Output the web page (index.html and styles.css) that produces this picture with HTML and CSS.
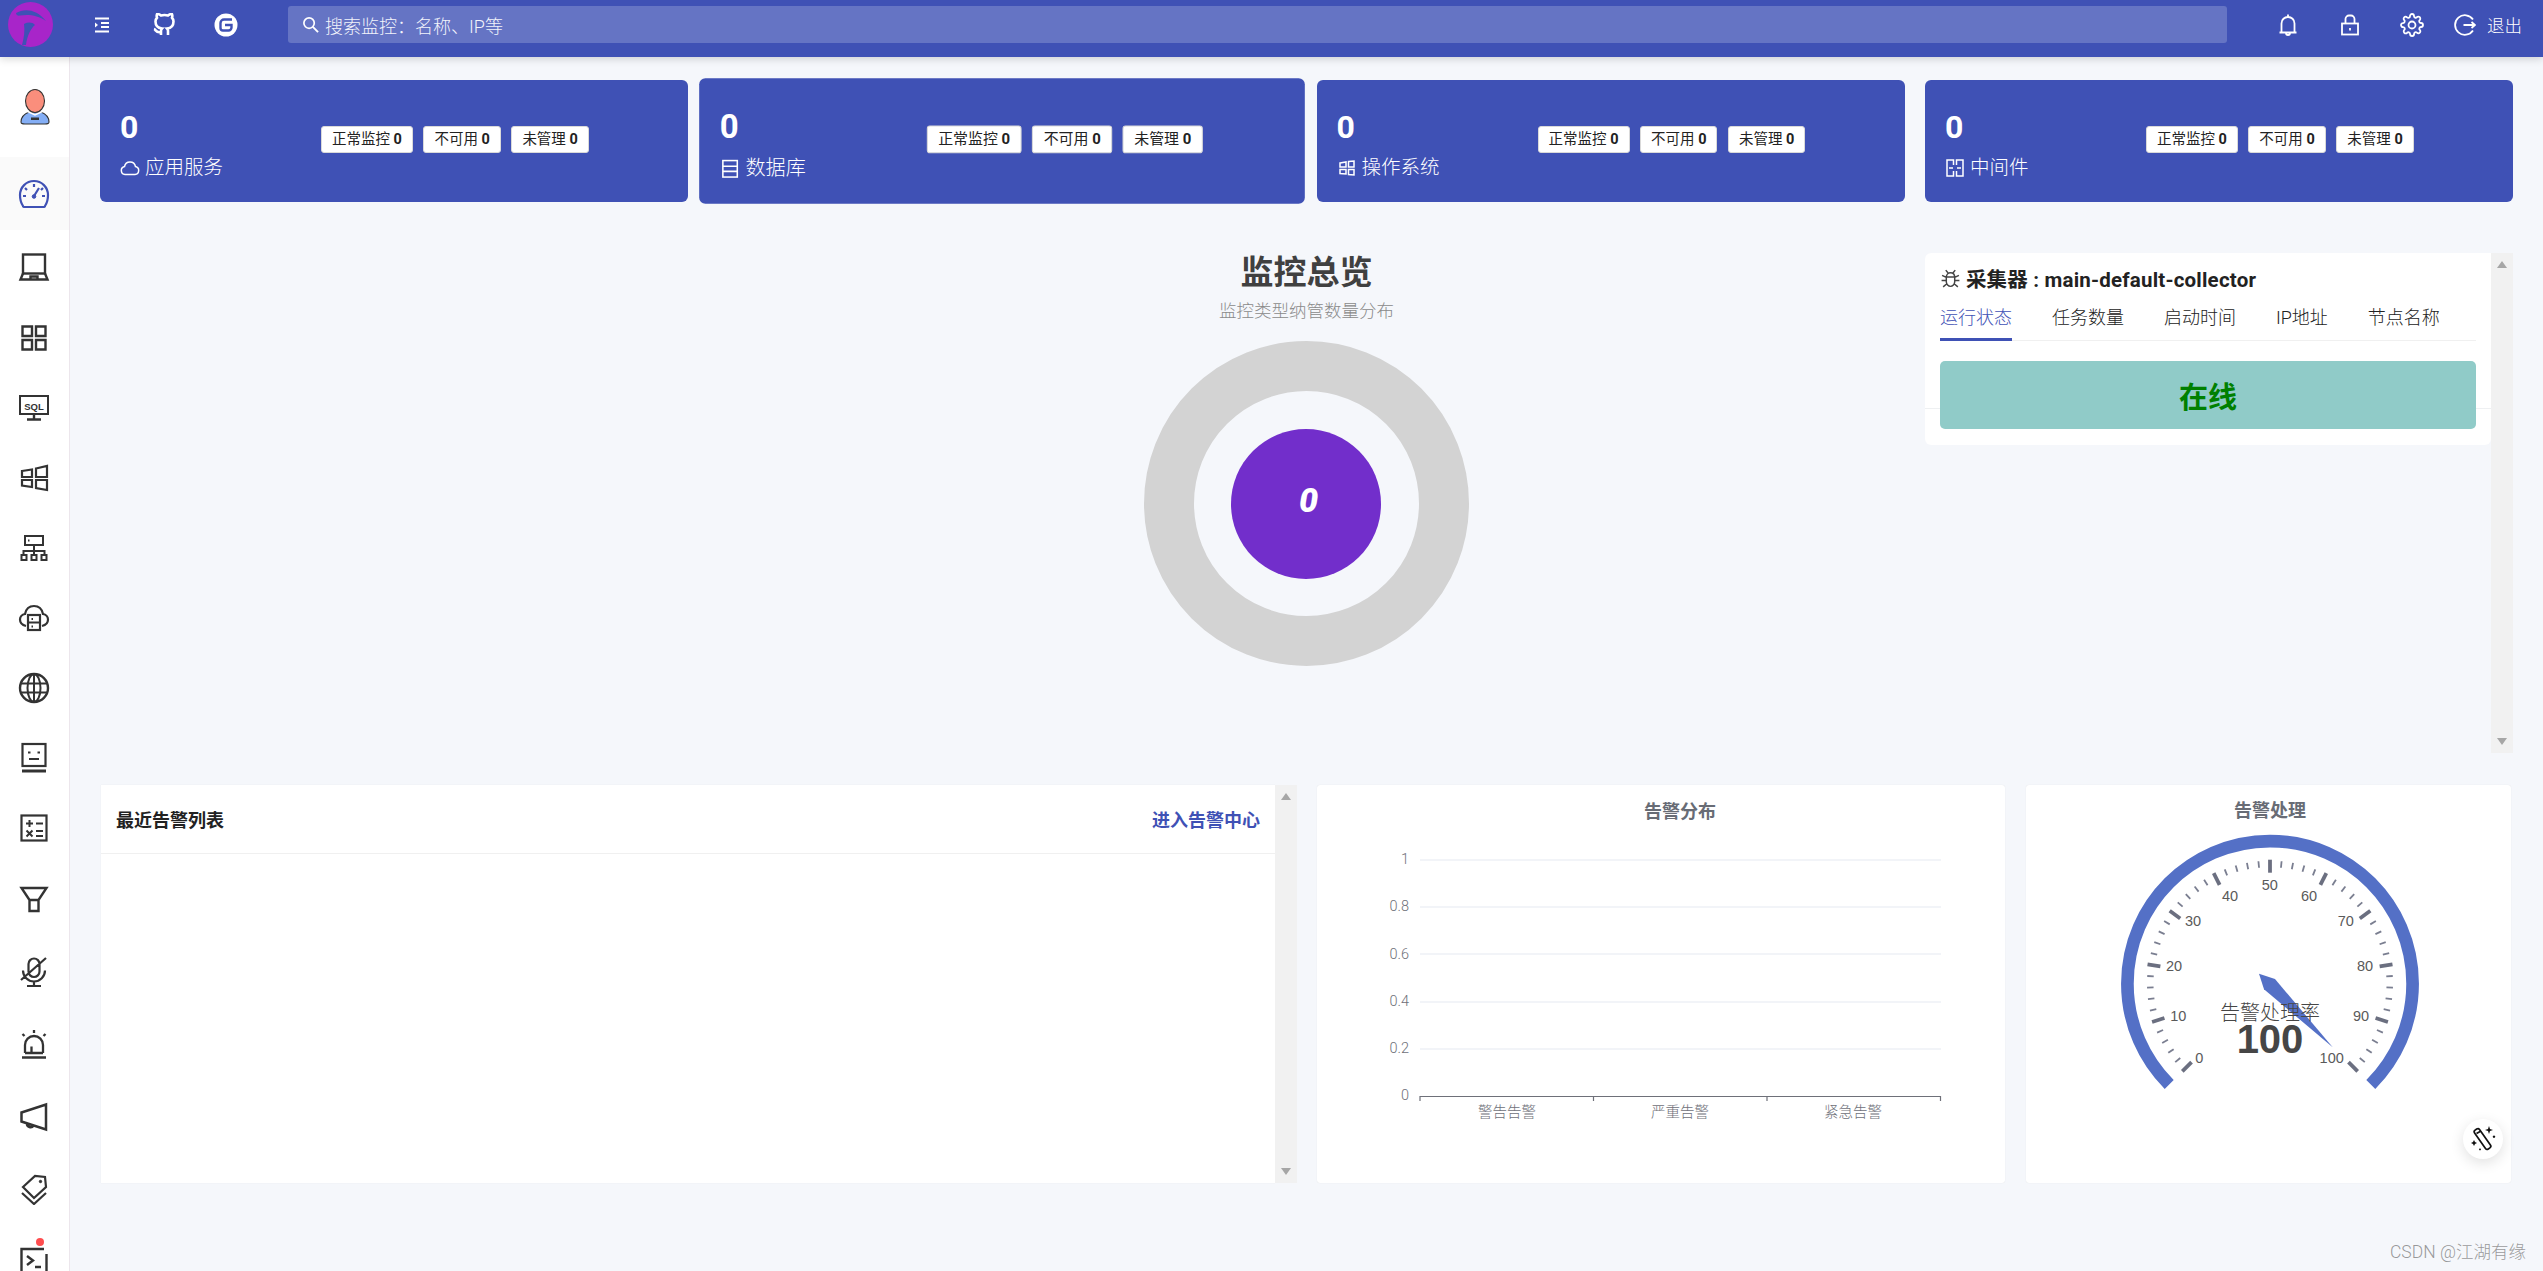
FILE: index.html
```html
<!DOCTYPE html>
<html lang="zh-CN">
<head>
<meta charset="utf-8">
<title>监控总览</title>
<link rel="stylesheet" href="styles.css">
</head>
<body>
<header class="topbar">
  <svg class="logo" viewBox="8 2 45 45" width="45" height="45"><ellipse cx="30.5" cy="24.5" rx="22.5" ry="22.5" fill="#a825c9"/><path d="M16 13C24 8 37 9 46 21C38 15 28 14 20 15.500C18 16 16 15 16 13Z" fill="#3f51b5"/><path d="M24 24C28 22 32 22 35 25C31 28 27 36 26 45L22 45C24 38 25 30 24 24Z" fill="#3f51b5"/></svg>
  <button class="tb-btn first"><svg viewBox="0 0 16 16" width="16" height="16" class="w"><path d="M1 1.500H15M7 6H15M7 10H15M1 14.500H15" stroke-width="1.800"/><path d="M1 5.500L4 8L1 10.500Z" fill="#fff" stroke="none"/></svg></button>
  <button class="tb-btn"><svg viewBox="0 0 24 24" width="24" height="24" class="w"><path stroke-width="2.600" d="M9 19c-5 1.500-5-2.500-7-3m14 6v-3.870a3.370 3.370 0 0 0-.94-2.610c3.140-.35 6.440-1.540 6.440-7A5.440 5.440 0 0 0 20 4.770 5.070 5.070 0 0 0 19.910 1S18.730.65 16 2.480a13.380 13.380 0 0 0-7 0C6.270.65 5.090 1 5.090 1A5.070 5.070 0 0 0 5 4.770a5.440 5.440 0 0 0-1.500 3.780c0 5.420 3.300 6.610 6.440 7A3.370 3.370 0 0 0 9 18.130V22"/></svg></button>
  <button class="tb-btn"><svg viewBox="0 0 24 24" width="24" height="24"><circle cx="12" cy="12" r="11.500" fill="#fff"/><path d="M18 6.500H10A3.500 3.500 0 0 0 6.500 10V15A2.500 2.500 0 0 0 9 17.500H14.500A3 3 0 0 0 17.500 14.500V12H11" fill="none" stroke="#3f51b5" stroke-width="2.400"/></svg></button>
  <div class="search"><svg viewBox="0 0 18 18" width="17" height="17" class="w"><circle cx="7.500" cy="7.500" r="5.500" stroke-width="1.800"/><path d="M11.500 11.500L17 17" stroke-width="2"/></svg><span>搜索监控：名称、IP等</span></div>
  <button class="tb-btn gap-left"><svg viewBox="0 0 24 24" width="24" height="24" class="w"><path stroke-width="1.800" d="M3.500 19.500H20.500M5.500 19.500V10.500C5.500 6.500 8.500 4 12 4S18.500 6.500 18.500 10.500V19.500M12 1.500V4M10 20A2 2 0 0 0 14 20"/></svg></button>
  <button class="tb-btn"><svg viewBox="0 0 24 24" width="24" height="24" class="w"><rect x="4" y="10.500" width="16" height="11" stroke-width="1.800"/><path d="M7.500 10.500V6A3.500 3.500 0 0 1 11 2.500H13A3.500 3.500 0 0 1 16.500 6V10.500M12 15V17.500" stroke-width="1.800"/></svg></button>
  <button class="tb-btn"><svg viewBox="0 0 24 24" width="24" height="24" class="w"><circle cx="12" cy="12" r="3.500" stroke-width="1.800"/><path stroke-width="1.800" d="M19.400 15a1.650 1.650 0 0 0 .33 1.820l.06.06a2 2 0 0 1 0 2.830 2 2 0 0 1-2.830 0l-.06-.06a1.650 1.650 0 0 0-1.820-.33 1.650 1.650 0 0 0-1 1.510V21a2 2 0 0 1-2 2 2 2 0 0 1-2-2v-.09A1.650 1.650 0 0 0 9 19.400a1.650 1.650 0 0 0-1.820.33l-.06.06a2 2 0 0 1-2.830 0 2 2 0 0 1 0-2.830l.06-.06a1.650 1.650 0 0 0 .33-1.820 1.650 1.650 0 0 0-1.510-1H3a2 2 0 0 1-2-2 2 2 0 0 1 2-2h.09A1.650 1.650 0 0 0 4.600 9a1.650 1.650 0 0 0-.33-1.820l-.06-.06a2 2 0 0 1 0-2.830 2 2 0 0 1 2.830 0l.06.06a1.650 1.650 0 0 0 1.820.33H9a1.650 1.650 0 0 0 1-1.510V3a2 2 0 0 1 2-2 2 2 0 0 1 2 2v.09a1.650 1.650 0 0 0 1 1.510 1.650 1.650 0 0 0 1.820-.33l.06-.06a2 2 0 0 1 2.830 0 2 2 0 0 1 0 2.830l-.06.06a1.650 1.650 0 0 0-.33 1.820V9a1.650 1.650 0 0 0 1.510 1H21a2 2 0 0 1 2 2 2 2 0 0 1-2 2h-.09a1.650 1.650 0 0 0-1.510 1z"/></svg></button>
  <div class="logout"><svg viewBox="0 0 22 22" width="22" height="22" class="w"><path stroke-width="1.800" d="M19 5.500A9.800 9.800 0 1 0 19 16.500M9.500 11H21M17.500 8L21 11L17.500 14"/></svg><span>退出</span></div>
</header>

<div class="layout">
  <nav class="sidebar">
    <div class="nav-avatar"><svg viewBox="0 0 32 38" width="32" height="38"><path d="M2 34C2 29 5 26 10 24L22 24C27 26 30 29 30 34C30 36 28 36 26 36H6C4 36 2 36 2 34Z" fill="#84aef5" stroke="#333" stroke-width="1.100"/><ellipse cx="16" cy="13" rx="9.500" ry="11.500" fill="#fa8e7c" stroke="#333" stroke-width="1.100"/><path d="M6.500 22.500L16 27L25.500 22.500" fill="none" stroke="#fff" stroke-width="1.500"/><rect x="12" y="29.500" width="8" height="2.500" fill="#333"/></svg></div>
    <div class="nav-item active"><svg viewBox="0 0 32 32" width="32" height="32" class="b"><path d="M5 28C3 25 2 21 2 17A14 14 0 0 1 30 17C30 21 29 25 27 28C27 29 26 29 25 29H7C6 29 5 29 5 28Z" stroke-width="2.200"/><path d="M16 18L21 10M16 6V9M7 10L9 12M25 10L23 12M5 18H8M27 18H24" stroke-width="2.200"/><circle cx="16" cy="18.500" r="1.800" fill="#3f51b5"/></svg></div>
    <div class="nav-item lead"><svg viewBox="0 0 32 32" width="32" height="32" class="k"><rect x="5" y="3.500" width="22" height="19" stroke-width="2.400"/><path d="M5 22.500L2.500 28.500H29.500L27 22.500M12.500 28.500V25.500H19.500V28.500" stroke-width="2.400"/></svg></div>
    <div class="nav-item"><svg viewBox="0 0 32 32" width="32" height="32" class="k"><path stroke-width="2.400" d="M4.500 4.500H14V14H4.500ZM18 4.500H27.500V14H18ZM4.500 18H14V27.500H4.500ZM18 18H27.500V27.500H18Z"/></svg></div>
    <div class="nav-item"><svg viewBox="0 0 32 32" width="32" height="32" class="k"><rect x="2" y="4" width="28" height="18" stroke-width="2"/><path d="M16 22V27M9 27.500H23" stroke-width="2.400"/><text class="sql" x="16" y="17.500" text-anchor="middle">SQL</text></svg></div>
    <div class="nav-item"><svg viewBox="0 0 32 32" width="32" height="32" class="k"><path stroke-width="2.200" d="M4 9L14 7.500V15H4ZM18 6.500L29 4V15H18ZM4 18H14V25L4 23.500ZM18 18H29V28L18 26Z"/></svg></div>
    <div class="nav-item"><svg viewBox="0 0 32 32" width="32" height="32" class="k"><rect x="7" y="4" width="18" height="9" stroke-width="2"/><path d="M10 8.500H11.500M16 13V19M5.500 23V19H26.500V23M16 19V23" stroke-width="2"/><path d="M3.500 23H8.500V28H3.500ZM13.500 23H18.500V28H13.500ZM23.500 23H28.500V28H23.500Z" stroke-width="2"/></svg></div>
    <div class="nav-item"><svg viewBox="0 0 32 32" width="32" height="32" class="k"><path stroke-width="2.200" d="M8 24C4 23 2 20 2 17.500C2 15 4 12.500 7 12C8 7 11.500 4 16 4C20.500 4 24 7 25 12C28 12.500 30 15 30 17.500C30 20 28 23 24 24"/><rect x="10" y="13" width="12" height="15" stroke-width="2.200"/><path d="M10 20.500H22M13.500 17H15M13.500 24.500H15" stroke-width="2"/></svg></div>
    <div class="nav-item"><svg viewBox="0 0 32 32" width="32" height="32" class="k"><circle cx="16" cy="16" r="14" stroke-width="2.400"/><ellipse cx="16" cy="16" rx="6.500" ry="14" stroke-width="2"/><path d="M3 11.500H29M3 20.500H29M16 2V30" stroke-width="2"/></svg></div>
    <div class="nav-item"><svg viewBox="0 0 32 32" width="32" height="32" class="k"><rect x="4.500" y="2" width="23" height="22" stroke-width="2.200"/><path d="M10 10.500H12.500M19.500 10.500H22M11 17H21" stroke-width="2.200"/><path d="M4 29H28" stroke-width="3"/></svg></div>
    <div class="nav-item"><svg viewBox="0 0 32 32" width="32" height="32" class="k"><rect x="3.500" y="3.500" width="25" height="25" stroke-width="2.200"/><path d="M8 11.500H15M11.500 8V15M18 11.500H25M8.500 18.500L14.500 24.500M14.500 18.500L8.500 24.500M18 19H25M18 24H25" stroke-width="2"/></svg></div>
    <div class="nav-item tall"><svg viewBox="0 0 32 32" width="32" height="32" class="k"><path stroke-width="2.400" d="M3.500 5H28.500L20.500 17H11.500ZM11.500 17V28H20.500V17"/></svg></div>
    <div class="nav-item tall"><svg viewBox="0 0 32 32" width="32" height="32" class="k"><path stroke-width="2.200" d="M16 21A5.500 5.500 0 0 1 10.500 15.500V8A5.500 5.500 0 0 1 21.500 8V15.500A5.500 5.500 0 0 1 16 21ZM5 14.500A11 11 0 0 0 27 14.500M16 25V30M9 30H23M3 24L28 2"/></svg></div>
    <div class="nav-item tall"><svg viewBox="0 0 32 32" width="32" height="32" class="k"><path stroke-width="2.300" d="M7 25V17A9 9 0 0 1 25 17V25M13.500 25V18.500M4 29.500H28M16 2V5M4.500 6L6.500 8M27.500 6L25.500 8M7 25H25"/></svg></div>
    <div class="nav-item tall"><svg viewBox="0 0 32 32" width="32" height="32" class="k"><path stroke-width="2.500" d="M3.500 11.500L28 3.500V28.500L3.500 20.500ZM9 22.500A3.500 3.500 0 0 0 15.500 24.500"/></svg></div>
    <div class="nav-item tall"><svg viewBox="0 0 32 32" width="32" height="32" class="k"><path stroke-width="2.200" d="M5 14L17 3L27 4L28 14L16 25ZM4 20L16 31L28 20"/><circle cx="22.500" cy="8.500" r="1.200" fill="#333"/></svg></div>
    <div class="nav-item tall nav-term"><svg viewBox="0 0 32 32" width="32" height="32" class="k"><path stroke-width="2.400" d="M26 3H3.500V29H28.500V8M9 10L15 14.500L9 19M17 21H23"/></svg><i class="dot"></i></div>
  </nav>

  <main class="main">
    <section class="stat-row">
      <article class="stat">
        <div class="stat-left"><div class="stat-num">0</div><div class="stat-label"><svg viewBox="0 0 20 20" width="20" height="20" class="w"><path stroke-width="1.500" d="M5 16.500A4 4 0 0 1 4.500 8.600A5.600 5.600 0 0 1 15.500 8.600A4 4 0 0 1 15 16.500Z"/></svg><span>应用服务</span></div></div>
        <div class="badges"><span class="badge">正常监控 <b>0</b></span><span class="badge">不可用 <b>0</b></span><span class="badge">未管理 <b>0</b></span></div>
      </article>
      <article class="stat lifted">
        <div class="stat-left"><div class="stat-num">0</div><div class="stat-label"><svg viewBox="0 0 20 20" width="20" height="20" class="w"><rect x="3" y="2" width="14" height="16" stroke-width="1.500"/><path d="M3 7.500H17M3 12.500H17" stroke-width="1.500"/></svg><span>数据库</span></div></div>
        <div class="badges"><span class="badge">正常监控 <b>0</b></span><span class="badge">不可用 <b>0</b></span><span class="badge">未管理 <b>0</b></span></div>
      </article>
      <article class="stat">
        <div class="stat-left"><div class="stat-num">0</div><div class="stat-label"><svg viewBox="0 0 20 20" width="20" height="20" class="w"><path stroke-width="1.500" d="M3 5L9 4V9H3ZM11.500 3.500L17 3V9H11.500ZM3 11.500H9V16L3 15.500ZM11.500 11.500H17V17L11.500 16.500Z"/></svg><span>操作系统</span></div></div>
        <div class="badges"><span class="badge">正常监控 <b>0</b></span><span class="badge">不可用 <b>0</b></span><span class="badge">未管理 <b>0</b></span></div>
      </article>
      <article class="stat">
        <div class="stat-left"><div class="stat-num">0</div><div class="stat-label"><svg viewBox="0 0 20 20" width="20" height="20" class="w"><path stroke-width="1.500" d="M8.500 7V2H2V18H8.500V13M11.500 7V2H18V18H11.500V13M4 10H8M16 10H12"/></svg><span>中间件</span></div></div>
        <div class="badges"><span class="badge">正常监控 <b>0</b></span><span class="badge">不可用 <b>0</b></span><span class="badge">未管理 <b>0</b></span></div>
      </article>
    </section>

    <section class="mid-row">
      <div class="overview">
        <h1 class="ov-title">监控总览</h1>
        <p class="ov-sub">监控类型纳管数量分布</p>
        <div class="donut"><div class="donut-core"><em>0</em></div></div>
      </div>
      <div class="collector-wrap">
        <div class="collector">
          <div class="col-title"><svg viewBox="0 0 20 20" width="21" height="21"><g fill="none" stroke="#444" stroke-width="1.400"><path d="M6 9C6 6 8 4.500 10 4.500S14 6 14 9V13C14 15.500 12 17.500 10 17.500S6 15.500 6 13ZM6.500 8.500H13.500M7.500 4.500L5.500 2M12.500 4.500L14.500 2M6 9L2 7M14 9L18 7M6 12H1.500M14 12H18.500M6.500 15L3 18M13.500 15L17 18"/></g></svg><span>采集器 : main-default-collector</span></div>
          <div class="tabs"><span class="tab on">运行状态</span><span class="tab">任务数量</span><span class="tab">启动时间</span><span class="tab">IP地址</span><span class="tab">节点名称</span></div>
          <div class="status">在线</div>
        </div>
        <div class="scrollbar"></div>
      </div>
    </section>

    <section class="bottom-row">
      <div class="alerts-wrap">
        <div class="alerts">
          <div class="alerts-head"><span class="alerts-title">最近告警列表</span><a class="alerts-link">进入告警中心</a></div>
        </div>
        <div class="scrollbar"></div>
      </div>
      <div class="chart-card">
        <svg viewBox="1 0 688 398" width="688" height="398">
          <text class="ch-title" x="364" y="33" text-anchor="middle">告警分布</text>
          <g class="grid"><path d="M104 75H625M104 122H625M104 169H625M104 217H625M104 264H625"/></g>
          <path class="axis" d="M104 316V311.500H624.500V316M277.500 311.500V316M451 311.500V316"/>
          <g class="yl" text-anchor="end"><text x="93" y="79">1</text><text x="93" y="126">0.8</text><text x="93" y="174">0.6</text><text x="93" y="221">0.4</text><text x="93" y="268">0.2</text><text x="93" y="315">0</text></g>
          <g class="xl" text-anchor="middle"><text x="191" y="332">警告告警</text><text x="364" y="332">严重告警</text><text x="537" y="332">紧急告警</text></g>
        </svg>
      </div>
      <div class="chart-card">
        <svg viewBox="2 0 486 398" width="486" height="398">
          <defs>
            <path id="mj" d="M0 -124V-111"/>
            <path id="mn" d="M0 -123V-116.500"/>
          </defs>
          <text class="ch-title" x="246" y="32" text-anchor="middle">告警处理</text>
          <path class="g-arc" d="M145.200 299.500A142.600 142.600 0 1 1 346.800 299.500"/>
          <g class="majors" transform="translate(246 198.700)"><use href="#mj" transform="rotate(-135)"/><use href="#mj" transform="rotate(-108)"/><use href="#mj" transform="rotate(-81)"/><use href="#mj" transform="rotate(-54)"/><use href="#mj" transform="rotate(-27)"/><use href="#mj"/><use href="#mj" transform="rotate(27)"/><use href="#mj" transform="rotate(54)"/><use href="#mj" transform="rotate(81)"/><use href="#mj" transform="rotate(108)"/><use href="#mj" transform="rotate(135)"/></g>
          <g class="minors" transform="translate(246 198.700)"><use href="#mn" transform="rotate(-129.600)"/><use href="#mn" transform="rotate(-124.200)"/><use href="#mn" transform="rotate(-118.800)"/><use href="#mn" transform="rotate(-113.400)"/><use href="#mn" transform="rotate(-102.600)"/><use href="#mn" transform="rotate(-97.200)"/><use href="#mn" transform="rotate(-91.800)"/><use href="#mn" transform="rotate(-86.400)"/><use href="#mn" transform="rotate(-75.600)"/><use href="#mn" transform="rotate(-70.200)"/><use href="#mn" transform="rotate(-64.800)"/><use href="#mn" transform="rotate(-59.400)"/><use href="#mn" transform="rotate(-48.600)"/><use href="#mn" transform="rotate(-43.200)"/><use href="#mn" transform="rotate(-37.800)"/><use href="#mn" transform="rotate(-32.400)"/><use href="#mn" transform="rotate(-21.600)"/><use href="#mn" transform="rotate(-16.200)"/><use href="#mn" transform="rotate(-10.800)"/><use href="#mn" transform="rotate(-5.400)"/><use href="#mn" transform="rotate(5.400)"/><use href="#mn" transform="rotate(10.800)"/><use href="#mn" transform="rotate(16.200)"/><use href="#mn" transform="rotate(21.600)"/><use href="#mn" transform="rotate(32.400)"/><use href="#mn" transform="rotate(37.800)"/><use href="#mn" transform="rotate(43.200)"/><use href="#mn" transform="rotate(48.600)"/><use href="#mn" transform="rotate(59.400)"/><use href="#mn" transform="rotate(64.800)"/><use href="#mn" transform="rotate(70.200)"/><use href="#mn" transform="rotate(75.600)"/><use href="#mn" transform="rotate(86.400)"/><use href="#mn" transform="rotate(91.800)"/><use href="#mn" transform="rotate(97.200)"/><use href="#mn" transform="rotate(102.600)"/><use href="#mn" transform="rotate(113.400)"/><use href="#mn" transform="rotate(118.800)"/><use href="#mn" transform="rotate(124.200)"/><use href="#mn" transform="rotate(129.600)"/></g>
          <g class="g-lab" text-anchor="middle"><text x="175.300" y="277.500">0</text><text x="154.300" y="235.500">10</text><text x="150" y="186">20</text><text x="169" y="141">30</text><text x="206" y="116">40</text><text x="245.700" y="105">50</text><text x="285" y="116">60</text><text x="321.700" y="141">70</text><text x="341" y="186">80</text><text x="337" y="235.500">90</text><text x="307.700" y="277.500">100</text></g>
          <path class="g-ptr" d="M308.700 262.300L251 194L235 188.700L240 204.300Z"/>
          <text class="g-name" x="246" y="235" text-anchor="middle">告警处理率</text>
          <text class="g-val" x="246" y="268" text-anchor="middle">100</text>
        </svg>
      </div>
    </section>
  </main>
</div>

<button class="fab"><svg viewBox="0 0 26 26" width="26" height="26"><g fill="none" stroke="#111" stroke-width="1.700"><rect x="9.500" y="1.500" width="6" height="23" rx="2" transform="rotate(-35 12.500 13)"/><path d="M6.500 7.500L11 5"/></g><path fill="#111" d="M19 0L20 3L23 4L20 5L19 8L18 5L15 4L18 3ZM4 14L5 16L7 17L5 18L4 20L3 18L1 17L3 16ZM24 9.500A1.200 1.200 0 1 1 23.990 9.500ZM10 22.500A.9.9 0 1 1 9.990 22.500Z"/></svg></button>
<div class="watermark">CSDN @江湖有缘</div>
</body>
</html>
```

FILE: styles.css
```css
* { box-sizing: border-box; }
html, body { margin: 0; height: 100%; overflow: hidden; }
body {
  width: 2543px;
  height: 1271px;
  position: relative;
  background: #f5f7fb;
  color: #222;
  font-family: Roboto, "Noto Sans CJK SC", sans-serif;
  display: flex;
  flex-direction: column;
}
svg { display: block; flex: none; }
.w { fill: none; stroke: #fff; }
.b { fill: none; stroke: #3f51b5; }
.k { fill: none; stroke: #333; }

/* top bar */
.topbar {
  height: 57px;
  flex: none;
  background: #3f51b5;
  display: flex;
  align-items: center;
  padding: 0 21px 8px 8px;
  color: #fff;
  box-shadow: 0 2px 8px rgba(0, 0, 0, .16);
  position: relative;
  z-index: 2;
}
.tb-btn {
  width: 62px;
  height: 48px;
  padding: 0;
  border: 0;
  background: none;
  display: flex;
  align-items: center;
  justify-content: center;
}
.tb-btn.first { margin-left: 18px; }
.tb-btn.gap-left { margin-left: 30px; }
.search {
  margin-left: 31px;
  flex: 1;
  height: 37px;
  background: #6574c4;
  border-radius: 3px;
  display: flex;
  align-items: center;
  gap: 6px;
  padding-left: 14px;
  font-size: 18px;
  font-weight: 300;
  color: #f2f3fb;
}
.logout {
  display: flex;
  align-items: center;
  gap: 11px;
  padding-left: 11px;
  font-size: 17.500px;
  font-weight: 300;
}

/* layout */
.layout { flex: 1; display: flex; min-height: 0; }
.sidebar {
  width: 70px;
  flex: none;
  background: #fff;
  border-right: 1px solid #ece6ec;
  overflow: hidden;
}
.nav-avatar { height: 100px; display: flex; align-items: center; justify-content: center; }
.nav-item { height: 70px; display: flex; align-items: center; justify-content: center; padding-right: 1px; }
.nav-item.active { height: 73px; background: #fafafa; }
.nav-item.lead { height: 73px; }
.nav-item.tall { height: 72.500px; }
.nav-term { position: relative; }
.dot { position: absolute; left: 36px; top: 12px; width: 8px; height: 8px; border-radius: 50%; background: #ff4d4f; }
.sql { font: 700 9.500px "Liberation Sans", sans-serif; fill: #333; stroke: none; }

.main { flex: 1; min-width: 0; padding: 23px 30px 0 30px; }

/* stat cards */
.stat-row {
  display: grid;
  grid-template-columns: repeat(4, 588px);
  column-gap: 20.300px;
}
.stat {
  height: 122px;
  background: #3f51b5;
  border-radius: 6px;
  padding-left: 20px;
  color: #fff;
  display: flex;
  align-items: flex-start;
}
.stat.lifted { transform: scale(1.03); }
.stat-left { width: 201px; padding-top: 27px; }
.stat-num { font-size: 32px; font-weight: 700; line-height: 40px; }
.stat-label {
  margin-top: 9px;
  display: flex;
  align-items: center;
  gap: 5px;
  font-size: 19.500px;
  font-weight: 300;
  line-height: 24px;
}
.badges { display: flex; gap: 10.500px; margin-top: 46px; }
.badge {
  height: 27px;
  line-height: 25px;
  padding: 0 10px;
  background: #fff;
  border: 1px solid #d9d9d9;
  border-radius: 3px;
  color: #222;
  font-size: 14.500px;
  white-space: nowrap;
}
.badge b { font-weight: 700; }

/* middle */
.mid-row {
  margin-top: 51px;
  height: 500px;
  display: grid;
  grid-template-columns: repeat(4, 588px);
  column-gap: 20.300px;
}
.overview {
  grid-column: 2 / 4;
  display: flex;
  flex-direction: column;
  align-items: center;
}
.ov-title { margin: 1px 0 0; font-size: 33px; font-weight: 700; line-height: 38px; color: #404040; }
.ov-sub { margin: 0; font-size: 17.500px; font-weight: 300; line-height: 38px; color: #8a8a8a; }
.donut {
  margin-top: 11px;
  width: 325px;
  height: 325px;
  border: 50px solid #d3d3d3;
  border-radius: 50%;
  display: flex;
  align-items: center;
  justify-content: center;
}
.donut-core {
  width: 150px;
  height: 150px;
  border-radius: 50%;
  background: #722ecb;
  display: flex;
  align-items: center;
  justify-content: center;
  padding: 0 0 8px 4px;
  color: #fff;
  font-size: 34px;
  font-weight: 900;
}
.collector-wrap { grid-column: 4; display: flex; align-items: flex-start; height: 500px; }
.collector {
  width: 566px;
  height: 192px;
  flex: none;
  padding: 0 15px;
  border-radius: 6px 0 6px 6px;
  background: linear-gradient(#eef0f2, #eef0f2) 0 155px / 100% 1px no-repeat, #fff;
}
.col-title {
  height: 49px;
  display: flex;
  align-items: center;
  gap: 5px;
  font-size: 20.500px;
  letter-spacing: .2px;
  font-weight: 700;
  padding-top: 1px;
}
.tabs { display: flex; gap: 40px; height: 39px; border-bottom: 1px solid #f0f0f0; font-size: 18px; font-weight: 300; line-height: 31px; }
.tab { height: 39px; }
.tab.on { color: #3f51b5; border-bottom: 3px solid #3f51b5; }
.status {
  margin-top: 20px;
  height: 68px;
  background: #90cbc8;
  border-radius: 5px;
  color: #008000;
  font-size: 29px;
  font-weight: 700;
  display: flex;
  align-items: center;
  justify-content: center;
}

/* scrollbars */
.scrollbar {
  width: 22px;
  align-self: stretch;
  flex: none;
  background: #f1f1f1;
  display: flex;
  flex-direction: column;
  justify-content: space-between;
  align-items: center;
  padding: 8px 0;
}
.scrollbar::before, .scrollbar::after { content: ""; border: 5px solid transparent; }
.scrollbar::before { border-top: 0; border-bottom: 7px solid #a6a6a6; }
.scrollbar::after { border-bottom: 0; border-top: 7px solid #a6a6a6; }

/* bottom */
.bottom-row {
  margin-top: 32px;
  margin-left: 1px;
  display: grid;
  grid-template-columns: 1196px 688px 486px;
  column-gap: 20px;
  height: 398px;
}
.bottom-row .chart-card:last-child { margin-left: 1px; }
.alerts-wrap { display: flex; }
.alerts { flex: 1; background: #fff; box-shadow: 0 0 1px rgba(0, 0, 0, .08); }
.alerts-head {
  height: 69px;
  padding: 0 15px;
  display: flex;
  align-items: center;
  justify-content: space-between;
  border-bottom: 1px solid #f0f0f0;
  font-size: 18px;
  font-weight: 700;
}
.alerts-link { color: #3f51b5; }
.chart-card { background: #fff; border-radius: 3px; box-shadow: 0 0 1px rgba(0, 0, 0, .12); }
.ch-title { font-size: 18px; font-weight: 700; fill: #686c75; }
.grid path { stroke: #eef1f6; stroke-width: 1.500; fill: none; }
.axis { stroke: #6e7079; stroke-width: 1.200; fill: none; }
.yl, .xl { font-size: 14.500px; fill: #6e7079; font-weight: 300; }
.g-arc { fill: none; stroke: #5470c6; stroke-width: 12.700; }
.majors use { stroke: #6b6f80; stroke-width: 3.800; }
.minors use { stroke: #7a7e90; stroke-width: 1.800; }
.g-lab { font: 14.500px "Liberation Sans", sans-serif; fill: #5a5a5a; }
.g-ptr { fill: #5470c6; }
.g-name { font-size: 20px; font-weight: 300; fill: #464646; }
.g-val { font: 700 40px "Liberation Sans", sans-serif; fill: #464646; }

/* floating */
.fab {
  position: absolute;
  left: 2463px;
  top: 1119px;
  width: 40px;
  height: 40px;
  padding: 0;
  border: 0;
  border-radius: 50%;
  background: #fff;
  box-shadow: 0 4px 14px rgba(0, 0, 0, .12);
  display: flex;
  align-items: center;
  justify-content: center;
}
.watermark {
  position: absolute;
  left: 2390px;
  top: 1241px;
  font-size: 17.500px;
  line-height: 22px;
  font-weight: 300;
  color: rgba(110, 110, 110, .7);
  white-space: nowrap;
}
```
